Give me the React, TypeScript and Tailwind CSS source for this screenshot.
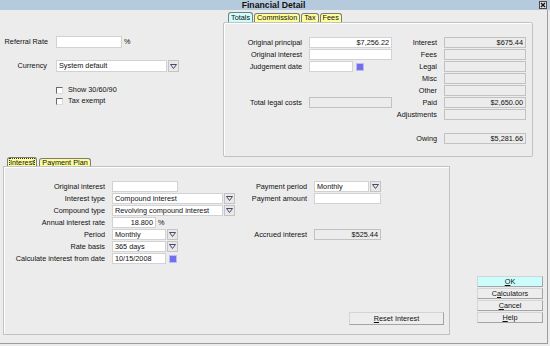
import React from 'react';

const Arrow = () => (
  <svg width="7" height="5" viewBox="0 0 7 5">
    <path d="M0.5 0.5 H6.5 L3.5 4.5 Z" fill="none" stroke="#4a4a66" strokeWidth="1" />
  </svg>
);

const Field = ({ className = '', value = '', disabled = false, left = false }: { className?: string; value?: string; disabled?: boolean; left?: boolean }) => (
  <div
    className={`h-[11px] flex items-center border ${disabled ? 'bg-[#ececec] border-[#c2c2c2]' : 'bg-white border-[#d2d2d2]'} ${left ? 'pl-[2px]' : 'justify-end pr-[2px]'} ${className}`}
  >
    {value}
  </div>
);

const Select = ({ className = '', value }: { className?: string; value: string }) => (
  <div className={`flex ${className}`}>
    <div className="flex-1 bg-white border border-[#d2d2d2] flex items-center pl-[2px]">{value}</div>
    <div className="w-[11px] ml-[1px] bg-[#e8e8e8] border border-[#c4c4c4] flex items-center justify-center">
      <Arrow />
    </div>
  </div>
);

const Cal = () => <div className="w-[8px] h-[8px] ml-[3px] bg-[#7070ec] border border-[#bcbcf2]" />;

const Label = ({ children }: { children?: React.ReactNode }) => (
  <div className="flex items-center justify-end whitespace-nowrap">{children}</div>
);

const Tab = ({ label, active, color, focus }: { label: string; active?: boolean; color: string; focus?: boolean }) => (
  <div
    className={`${active ? 'h-[10px]' : 'h-[9px] mt-[1px]'} px-[2px] border border-b-0 border-[#7c7c7c] rounded-t-[3px] flex items-center ${color}`}
  >
    {focus ? <span className="outline-1 outline-dotted outline-[#333]">{label}</span> : label}
  </div>
);

const Check = ({ label }: { label: string }) => (
  <div className="h-[8px] flex items-center gap-[5px]">
    <div className="w-[7px] h-[7px] bg-white border-t border-l border-[#6a6a6a] border-r border-b border-r-[#dcdcdc] border-b-[#dcdcdc]" />
    <span>{label}</span>
  </div>
);

const Btn = ({ children, className = '' }: { children: React.ReactNode; className?: string }) => (
  <div
    className={`flex items-center justify-center border border-[#d4d4d4] border-r-[#a4a4a4] border-b-[#a4a4a4] ${className}`}
  >
    {children}
  </div>
);

export default function App() {
  return (
    <div className="w-[550px] h-[346px] bg-[#ececec] overflow-hidden flex flex-col font-['Liberation_Sans',Arial,sans-serif] text-[7.3px] leading-none text-[#111]">
      {/* title bar */}
      <div className="h-[10px] bg-[#b6cade] flex items-center">
        <div className="flex-1" />
        <div className="font-bold text-[8.7px] text-[#111]">Financial Detail</div>
        <div className="flex-1 flex justify-end pr-[3px]">
          <div className="w-[8px] h-[8px] bg-[#e2e2e2] border border-[#4a4a4a] flex items-center justify-center">
            <svg width="6" height="6" viewBox="0 0 6 6">
              <path d="M1 1 L5 5 M5 1 L1 5" stroke="#111" strokeWidth="1.3" />
            </svg>
          </div>
        </div>
      </div>

      <div className="w-[548px] h-[334px] border-r border-b border-[#9c9c9c] flex flex-col">
        {/* top row */}
        <div className="flex h-[147px]">
          <div className="w-[223px] pt-[26px] flex flex-col">
            <div className="flex items-center h-[12px]">
              <div className="w-[48px] text-right">Referral Rate</div>
              <div className="ml-[8px] w-[66px] h-[12px] bg-white border border-[#d2d2d2]" />
              <span className="ml-[2px]">%</span>
            </div>
            <div className="flex items-center h-[12px] mt-[12px]">
              <div className="w-[47px] text-right">Currency</div>
              <Select className="ml-[9px] w-[123px] h-[12px]" value="System default" />
            </div>
            <div className="mt-[14px] ml-[56px] flex flex-col gap-[3px]">
              <Check label="Show 30/60/90" />
              <Check label="Tax exempt" />
            </div>
          </div>

          <div className="w-[310px] flex flex-col pt-[2px]">
            <div className="flex gap-[1px] pl-[5px] h-[10px]">
              <Tab label="Totals" active color="bg-[#cdfdfd]" />
              <Tab label="Commission" color="bg-[#fdfd9c]" />
              <Tab label="Tax" color="bg-[#fdfd9c]" />
              <Tab label="Fees" color="bg-[#fdfd9c]" />
            </div>
            <div className="flex-1 border border-[#c2c2c2] rounded-[2px] shadow-[inset_1px_1px_0_#fff] pt-[14px]">
              <div className="grid grid-cols-[78px_83px_38px_82px] gap-x-[7px] gap-y-[1px] auto-rows-[11px]">
                <Label>Original principal</Label>
                <Field value="$7,256.22" />
                <Label>Interest</Label>
                <Field disabled value="$675.44" />

                <Label>Original interest</Label>
                <Field />
                <Label>Fees</Label>
                <Field disabled />

                <Label>Judgement date</Label>
                <div className="flex items-center">
                  <Field className="w-[44px]" />
                  <Cal />
                </div>
                <Label>Legal</Label>
                <Field disabled />

                <div />
                <div />
                <Label>Misc</Label>
                <Field disabled />

                <div />
                <div />
                <Label>Other</Label>
                <Field disabled />

                <Label>Total legal costs</Label>
                <Field disabled />
                <Label>Paid</Label>
                <Field disabled value="$2,650.00" />

                <div />
                <div />
                <Label>Adjustments</Label>
                <Field disabled />

                <div />
                <div />
                <div />
                <div />

                <div />
                <div />
                <Label>Owing</Label>
                <Field disabled value="$5,281.66" />
              </div>
            </div>
          </div>
        </div>

        {/* bottom row */}
        <div className="flex flex-1">
          <div className="ml-[3px] w-[447px] flex flex-col">
            <div className="flex gap-[2px] pl-[4px] h-[9px]">
              <Tab label="Interest" active color="bg-[#fdfd9c]" focus />
              <Tab label="Payment Plan" color="bg-[#fdfd9c]" />
            </div>
            <div className="h-[169px] border border-[#c2c2c2] shadow-[inset_1px_1px_0_#fff] pt-[14px] pl-[1px] flex flex-col">
              <div className="grid grid-cols-[100px_123px_65px_67px] gap-x-[7px] gap-y-[1px] auto-rows-[11px]">
                <Label>Original interest</Label>
                <Field className="w-[66px]" />
                <Label>Payment period</Label>
                <Select className="h-[11px]" value="Monthly" />

                <Label>Interest type</Label>
                <Select className="h-[11px]" value="Compound interest" />
                <Label>Payment amount</Label>
                <Field />

                <Label>Compound type</Label>
                <Select className="h-[11px]" value="Revolving compound interest" />
                <div />
                <div />

                <Label>Annual interest rate</Label>
                <div className="flex items-center">
                  <Field className="w-[44px]" value="18.800" />
                  <span className="ml-[2px]">%</span>
                </div>
                <div />
                <div />

                <Label>Period</Label>
                <Select className="h-[11px] w-[66px]" value="Monthly" />
                <Label>Accrued interest</Label>
                <Field disabled value="$525.44" />

                <Label>Rate basis</Label>
                <Select className="h-[11px] w-[66px]" value="365 days" />
                <div />
                <div />

                <Label>Calculate interest from date</Label>
                <div className="flex items-center">
                  <Field className="w-[54px]" left value="10/15/2008" />
                  <Cal />
                </div>
                <div />
                <div />
              </div>
              <Btn className="mt-auto self-end mr-[5px] mb-[9px] w-[95px] h-[13px] bg-[#ededed]">
                <span><u>R</u>eset Interest</span>
              </Btn>
            </div>
          </div>

          <div className="ml-[27px] w-[66px] pt-[119px] flex flex-col gap-[1px]">
            <Btn className="h-[11px] bg-[#cbfdfd] border-[#a8c8c8]">
              <span><u>O</u>K</span>
            </Btn>
            <Btn className="h-[11px] bg-[#ededed]">
              <span>C<u>a</u>lculators</span>
            </Btn>
            <Btn className="h-[11px] bg-[#ededed]">
              <span><u>C</u>ancel</span>
            </Btn>
            <Btn className="h-[11px] bg-[#ededed]">
              <span><u>H</u>elp</span>
            </Btn>
          </div>
        </div>
      </div>
    </div>
  );
}
